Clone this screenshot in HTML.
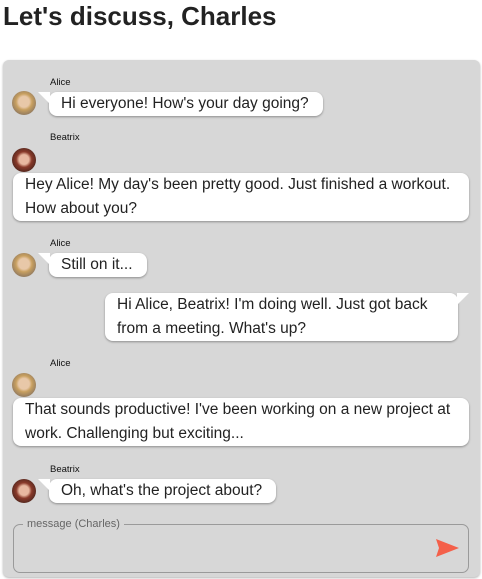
<!DOCTYPE html>
<html><head><style>
body{margin:0;width:482px;height:579px;background:#fff;font-family:"Liberation Sans",sans-serif;overflow:hidden;position:relative;color:#222}
h1{position:absolute;left:3px;top:0;margin:0;font-size:26px;font-weight:bold;line-height:32px;color:#222}
.panel{position:absolute;left:3px;top:60px;width:477px;height:517px;background:#d7d7d7;border-radius:6px;box-shadow:0 1px 2px rgba(0,0,0,.3)}
.n{position:absolute;font-size:9.5px;color:#111}
.av{position:absolute;width:24px;height:24px;border-radius:50%;left:12px}
.a{background:radial-gradient(circle at 50% 45%,#e8c8a8 0 30%,#c8a060 45%,#9a8060 70%,#7a8a90 100%)}
.b{background:radial-gradient(circle at 50% 48%,#e8b8a0 0 28%,#8a3a2a 45%,#5a2a20 70%,#c0b0b0 100%)}
.m{position:absolute;background:#fff;border-radius:8px;font-size:15.5px;line-height:24px;padding:0 14px 0 12px;box-shadow:0 1px 2px rgba(0,0,0,.35);white-space:nowrap;height:auto;min-height:24px}
.tl:before{content:"";position:absolute;left:-11px;top:0;border-top:12px solid #fff;border-left:12px solid transparent}
.tr:before{content:"";position:absolute;right:-11px;top:0;border-top:12px solid #fff;border-right:12px solid transparent}
fieldset{position:absolute;left:13px;top:518px;width:456px;height:55px;margin:0;padding:0;border:1px solid #9a9a9a;border-radius:7px;box-sizing:border-box}
legend{margin-left:9px;padding:0 4px;font-size:11px;color:#666}
</style></head><body>
<h1>Let's discuss, Charles</h1>
<div class="panel"></div>
<div class="n" style="left:50px;top:77px">Alice</div>
<div class="av a" style="top:91px"></div>
<div class="m tl" style="left:49px;top:92px">Hi everyone! How's your day going?</div>
<div class="n" style="left:50px;top:132px">Beatrix</div>
<div class="av b" style="top:148px"></div>
<div class="m" style="left:13px;top:173px;width:430px">Hey Alice! My day's been pretty good. Just finished a workout.<br>How about you?</div>
<div class="n" style="left:50px;top:238px">Alice</div>
<div class="av a" style="top:253px"></div>
<div class="m tl" style="left:49px;top:253px">Still on it...</div>
<div class="m tr" style="left:105px;top:293px;width:327px">Hi Alice, Beatrix! I'm doing well. Just got back<br>from a meeting. What's up?</div>
<div class="n" style="left:50px;top:358px">Alice</div>
<div class="av a" style="top:373px"></div>
<div class="m" style="left:13px;top:398px;width:430px">That sounds productive! I've been working on a new project at<br>work. Challenging but exciting...</div>
<div class="n" style="left:50px;top:464px">Beatrix</div>
<div class="av b" style="top:479px"></div>
<div class="m tl" style="left:49px;top:479px">Oh, what's the project about?</div>
<fieldset><legend>message (Charles)</legend></fieldset>
<svg style="position:absolute;left:436px;top:539px" width="23" height="18" viewBox="0 0 23 18"><path d="M0 0L23 9L0 18L3 9Z" fill="#f4604a"/></svg>
</body></html>
